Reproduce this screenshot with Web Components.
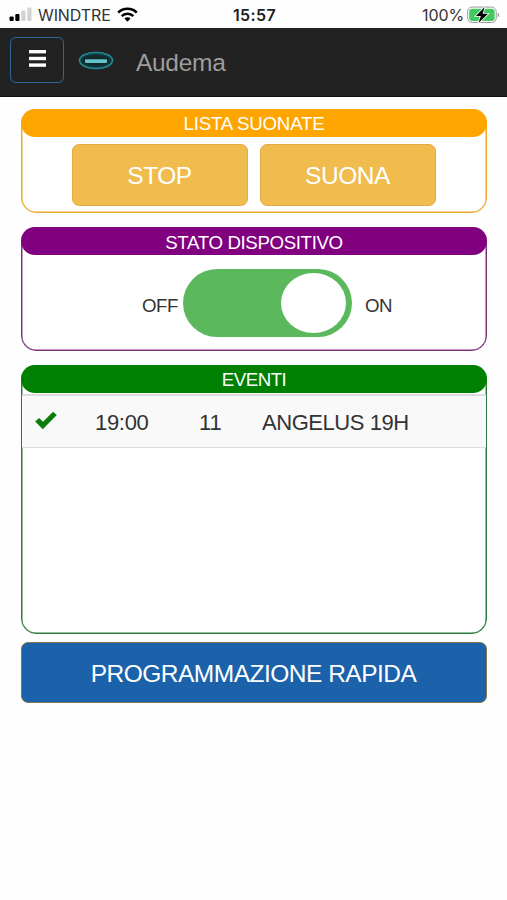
<!DOCTYPE html>
<html lang="it">
<head>
<meta charset="utf-8">
<meta name="viewport" content="width=device-width, initial-scale=1">
<title>Audema</title>
<style>
  body {
    margin: 0;
    background: #fefefe;
    color: #333;
    font-family: "Liberation Sans", Arial, sans-serif;
  }
</style>
</head>
<body>
<audema-app></audema-app>

<script>
/**
 * Phone status bar: carrier, clock and battery
 */
class StatusBar extends HTMLElement {
  constructor() {
    super();
    this.attachShadow({ mode: 'open' });
  }

  connectedCallback() {
    this.shadowRoot.innerHTML = `
      <style>
        :host {
          display: grid;
          grid-template-columns: 1fr auto 1fr;
          align-items: center;
          height: 28px;
          padding: 0 7px 0 9px;
          box-sizing: border-box;
          font-family: Inter, sans-serif;
          font-size: 16px;
          line-height: 28px;
          color: #333;
        }

        div {
          display: flex;
          align-items: center;
        }

        svg {
          display: block;
          flex: none;
        }

        .carrier {
          margin: 1px 6px 0 6px;
          letter-spacing: -0.1px;
        }

        time {
          margin-top: 1px;
          font-weight: 600;
          letter-spacing: 0.4px;
          color: #222;
        }

        .power {
          justify-content: flex-end;
        }

        .level {
          margin: 1px 3px 0 0;
          letter-spacing: -0.1px;
        }
      </style>
      <div>
        <svg width="23" height="15" viewBox="0 0 23 15">
          <rect x="0.5" y="9.5" width="4.2" height="4.5" rx="1" fill="#000"/>
          <rect x="6.3" y="7" width="4.2" height="7" rx="1" fill="#000"/>
          <rect x="12.3" y="3.5" width="4.2" height="10.5" rx="1" fill="#d2d2d2"/>
          <rect x="18.3" y="0.5" width="4.2" height="13.5" rx="1" fill="#d2d2d2"/>
        </svg>
        <span class="carrier">${this.getAttribute('carrier')}</span>
        <svg width="21" height="15" viewBox="0 0 21 15">
          <g fill="none" stroke="#000" stroke-width="2.5">
            <path d="M1.2 5.6a13.2 13.2 0 0 1 18.6 0"/>
            <path d="M4.7 9.1a8.2 8.2 0 0 1 11.6 0"/>
          </g>
          <path d="M10.5 14.8l-3.1-3.2a4.4 4.4 0 0 1 6.2 0z" fill="#000"/>
        </svg>
      </div>
      <time>${this.getAttribute('time')}</time>
      <div class="power">
        <span class="level">${this.getAttribute('level')}</span>
        <svg width="33" height="18" viewBox="0 0 33 18">
          <rect x="0.6" y="1.1" width="28.6" height="15.4" rx="4.5" fill="#fff" stroke="#9b9b9b"/>
          <rect x="2.2" y="2.7" width="25.4" height="12.2" rx="3" fill="#3fc95f"/>
          <path d="M30.6 6.8c2.2.8 2.2 3.6 0 4.4z" fill="#9b9b9b"/>
          <path d="M17.6 1L8.9 9.9h4.9l-2.3 7.2 9.5-9.4h-5.4z" fill="#000" stroke="#fff" stroke-width="1.6" paint-order="stroke"/>
        </svg>
      </div>
    `;
  }
}

/**
 * Dark navigation bar with the menu button, the logo and the app name
 */
class NavBar extends HTMLElement {
  constructor() {
    super();
    this.attachShadow({ mode: 'open' });
  }

  connectedCallback() {
    this.shadowRoot.innerHTML = `
      <style>
        :host {
          display: flex;
          align-items: center;
          height: 69px;
          padding: 0 10px 4px;
          box-sizing: border-box;
          background: #222;
          border-bottom: 1px solid #101010;
          color: #9d9d9d;
        }

        button {
          display: grid;
          place-items: center;
          width: 54px;
          height: 46px;
          margin: 0;
          padding: 0 0 3px;
          background: none;
          border: 1px solid #2f659c;
          border-radius: 6px;
          box-sizing: border-box;
        }

        .logo {
          margin-left: 14px;
        }

        span {
          margin: 5px 0 0 22px;
          font-size: 24.5px;
          line-height: 30px;
          letter-spacing: -0.3px;
        }
      </style>
      <button aria-label="Menu">
        <svg width="17" height="17" viewBox="0 0 17 17" fill="#fff">
          <rect width="17" height="3.4"/>
          <rect y="6.8" width="17" height="3.4"/>
          <rect y="13.4" width="17" height="3.4"/>
        </svg>
      </button>
      <svg class="logo" width="36" height="20" viewBox="0 0 36 20">
        <ellipse cx="18" cy="10.5" rx="16.5" ry="8" fill="#143a40" stroke="#208b93" stroke-width="1.6"/>
        <ellipse cx="18" cy="10.5" rx="13.5" ry="5.5" fill="#10292d"/>
        <rect x="7" y="9.3" width="22" height="3.6" rx="0.8" fill="#63c3ca"/>
      </svg>
      <span><slot></slot></span>
    `;
  }
}

/**
 * Rounded panel with a coloured title strip
 */
class TitledPanel extends HTMLElement {
  constructor() {
    super();
    this.attachShadow({ mode: 'open' });
  }

  connectedCallback() {
    this.shadowRoot.innerHTML = `
      <style>
        :host {
          display: block;
          box-sizing: border-box;
          border: 1px solid var(--line);
          border-radius: 15px;
          background: #fff;
          box-shadow: inset 0 0 0 0.5px var(--line);
        }

        h2 {
          margin: -1px;
          height: 28px;
          box-sizing: border-box;
          padding-top: var(--title-top, 1px);
          border-radius: 14px;
          background: var(--tone);
          color: #fff;
          font-size: 18.7px;
          font-weight: normal;
          line-height: 28px;
          text-align: center;
          letter-spacing: var(--title-spacing, 0);
        }
      </style>
      <h2>${this.getAttribute('heading')}</h2>
      <slot></slot>
    `;
  }
}

class ActionButton extends HTMLElement {
  constructor() {
    super();
    this.attachShadow({ mode: 'open' });
  }

  connectedCallback() {
    this.shadowRoot.innerHTML = `
      <style>
        :host {
          display: block;
        }

        button {
          display: block;
          width: 100%;
          height: var(--button-height, 62px);
          margin: 0;
          padding: 2px 1px 0 0;
          border: 1px solid var(--button-border, #e8a847);
          border-radius: 7px;
          background: var(--button-bg, #f0bc4e);
          color: #fff;
          font: 24.5px "Liberation Sans", Arial, sans-serif;
          letter-spacing: var(--button-spacing, -0.45px);
        }
      </style>
      <button><slot></slot></button>
    `;
  }
}

class ToggleSwitch extends HTMLElement {
  constructor() {
    super();
    this.attachShadow({ mode: 'open' });
  }

  connectedCallback() {
    this.shadowRoot.innerHTML = `
      <style>
        :host {
          display: flex;
          justify-content: flex-end;
          align-items: center;
          width: 169px;
          height: 68px;
          padding: 0 6px 0 0;
          box-sizing: border-box;
          border-radius: 34px;
          background: #5cb85c;
        }

        i {
          width: 65px;
          height: 60px;
          border-radius: 50%;
          background: #fff;
        }
      </style>
      <i></i>
    `;
  }
}

class EventRow extends HTMLElement {
  constructor() {
    super();
    this.attachShadow({ mode: 'open' });
  }

  connectedCallback() {
    this.shadowRoot.innerHTML = `
      <style>
        :host {
          display: grid;
          grid-template-columns: 73px 104px 63px 1fr;
          align-items: center;
          height: 54px;
          box-sizing: border-box;
          border-top: 2px solid #ddd;
          border-bottom: 1px solid #ddd;
          background: #f9f9f9;
          font-size: 22px;
        }

        svg {
          margin: -2px 0 0 13px;
        }

        span {
          padding-top: 2px;
        }
      </style>
      <svg width="22" height="19" viewBox="0 0 22 19">
        <path d="M0.2 10.6L4.1 6.9 8 10.7 18 0.7 21.8 4 7.8 18.2z" fill="#0a7d0a"/>
      </svg>
      <span style="letter-spacing: -0.3px">${this.getAttribute('time')}</span>
      <span>${this.getAttribute('number')}</span>
      <span style="letter-spacing: -0.45px">${this.getAttribute('name')}</span>
    `;
  }
}

class AudemaApp extends HTMLElement {
  constructor() {
    super();
    this.attachShadow({ mode: 'open' });
  }

  connectedCallback() {
    this.shadowRoot.innerHTML = `
      <style>
        :host {
          display: block;
          min-height: 900px;
        }

        main {
          display: flex;
          flex-direction: column;
          gap: 14px;
          padding: 12px 20px 0 21px;
        }

        .play {
          --tone: #ffa500;
          --line: #edaa2a;
          --title-spacing: -0.2px;
          height: 104px;
        }

        .state {
          --tone: #800080;
          --line: #7a337a;
          --title-spacing: -0.37px;
          --title-top: 2px;
          height: 124px;
        }

        .events {
          --tone: #008000;
          --line: #2c7d39;
          --title-spacing: -0.5px;
          height: 269px;
        }

        .buttons {
          display: grid;
          grid-template-columns: 176px 176px;
          justify-content: center;
          gap: 12px;
          padding-top: 8px;
        }

        .switch {
          display: flex;
          align-items: center;
          padding: 15px 0 0 120px;
          font-size: 18.7px;
          letter-spacing: -0.5px;
        }

        .switch span {
          padding-top: 5px;
        }

        .off {
          width: 41px;
        }

        .on {
          margin-left: 13px;
        }

        event-row {
          margin-top: 2px;
        }

        .quick {
          --button-bg: #1b62ab;
          --button-border: #85764f;
          --button-height: 61px;
          --button-spacing: -0.5px;
          margin-top: -6px;
        }
      </style>
      <status-bar carrier="WINDTRE" time="15:57" level="100%"></status-bar>
      <nav-bar>Audema</nav-bar>
      <main>
        <titled-panel class="play" heading="LISTA SUONATE">
          <div class="buttons">
            <action-button>STOP</action-button>
            <action-button>SUONA</action-button>
          </div>
        </titled-panel>
        <titled-panel class="state" heading="STATO DISPOSITIVO">
          <div class="switch">
            <span class="off">OFF</span>
            <toggle-switch></toggle-switch>
            <span class="on">ON</span>
          </div>
        </titled-panel>
        <titled-panel class="events" heading="EVENTI">
          <event-row time="19:00" number="11" name="ANGELUS 19H"></event-row>
        </titled-panel>
        <action-button class="quick">PROGRAMMAZIONE RAPIDA</action-button>
      </main>
    `;
  }
}

customElements.define('status-bar', StatusBar);
customElements.define('nav-bar', NavBar);
customElements.define('titled-panel', TitledPanel);
customElements.define('action-button', ActionButton);
customElements.define('toggle-switch', ToggleSwitch);
customElements.define('event-row', EventRow);
customElements.define('audema-app', AudemaApp);
</script>
</body>
</html>
